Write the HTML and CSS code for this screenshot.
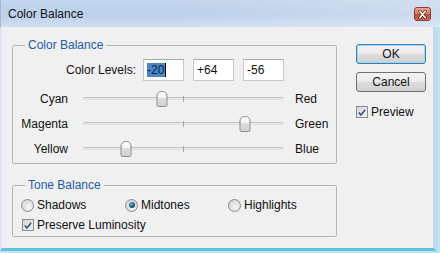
FILE: index.html
```html
<!DOCTYPE html>
<html lang="en">
<head>
    <meta charset="UTF-8">
    <link rel="stylesheet" href="styles.css">
    <title>Color Balance</title>
</head>
<body>
    <div class="window">
        <div class="titlebar">
            <span class="title">Color Balance</span>
            <div class="close">
                <svg width="16" height="13" viewBox="0 0 16 13">
                    <path d="M5 3 L11 10 M11 3 L5 10" stroke="#5a2a24" stroke-width="3.2" stroke-linecap="round"/>
                    <path d="M5 3 L11 10 M11 3 L5 10" stroke="#ffffff" stroke-width="1.6" stroke-linecap="round"/>
                </svg>
            </div>
        </div>
        <div class="client">
            <div class="main">
                <fieldset class="group levels">
                    <legend>Color Balance</legend>
                    <div class="levelrow">
                        <span class="levellabel">Color Levels:</span>
                        <div class="field"><span class="sel">-20</span></div>
                        <div class="field">+64</div>
                        <div class="field">-56</div>
                    </div>
                    <div class="sliderrow">
                        <span class="left">Cyan</span>
                        <div class="track"><div class="groove"></div><div class="tick"></div><div class="thumb" style="left: 79px"></div></div>
                        <span class="right">Red</span>
                    </div>
                    <div class="sliderrow">
                        <span class="left">Magenta</span>
                        <div class="track"><div class="groove"></div><div class="tick"></div><div class="thumb" style="left: 162px"></div></div>
                        <span class="right">Green</span>
                    </div>
                    <div class="sliderrow">
                        <span class="left">Yellow</span>
                        <div class="track"><div class="groove"></div><div class="tick"></div><div class="thumb" style="left: 43px"></div></div>
                        <span class="right">Blue</span>
                    </div>
                </fieldset>
                <fieldset class="group tone">
                    <legend>Tone Balance</legend>
                    <div class="radiorow">
                        <div class="opt"><span class="radio"></span>Shadows</div>
                        <div class="opt"><span class="radio on"><span class="dot"></span></span>Midtones</div>
                        <div class="opt"><span class="radio"></span>Highlights</div>
                    </div>
                    <div class="opt check">
                        <span class="box">
                            <svg width="11" height="11" viewBox="0 0 11 11"><path d="M2 5.5 L4.3 8.2 L9 2.5" fill="none" stroke="#3e5289" stroke-width="1.8"/></svg>
                        </span>Preserve Luminosity
                    </div>
                </fieldset>
            </div>
            <div class="side">
                <div class="btn default">OK</div>
                <div class="btn">Cancel</div>
                <div class="opt preview">
                    <span class="box">
                        <svg width="11" height="11" viewBox="0 0 11 11"><path d="M2 5.5 L4.3 8.2 L9 2.5" fill="none" stroke="#3e5289" stroke-width="1.8"/></svg>
                    </span>Preview
                </div>
            </div>
        </div>
    </div>
</body>
</html>
```

FILE: styles.css
```css
body {
    margin: 0;
    background-color: #f0f0f0;
    font-family: "Liberation Sans", Arial, sans-serif;
    font-size: 12px;
    color: #111;
}
.window {
    width: 440px;
    height: 253px;
    overflow: hidden;
    background-color: #bfe6f0;
}
.titlebar {
    height: 27px;
    display: flex;
    align-items: center;
    justify-content: space-between;
    padding: 0 9px 0 7px;
    box-sizing: border-box;
    background: linear-gradient(90deg, rgba(255,255,255,0) 40%, rgba(255,255,255,0.25) 100%),
                linear-gradient(180deg, #c3d5ec 0%, #bcd0ea 55%, #d0def1 100%);
    border-left: 1px solid #a3b8d3;
}
.title {
    font-size: 12px;
    color: #111;
    padding-top: 1px;
}
.close {
    width: 17px;
    height: 14px;
    border: 1px solid #8d3b30;
    border-radius: 3px;
    box-sizing: border-box;
    background: linear-gradient(180deg, #eba898 0%, #d57563 50%, #bd4d38 55%, #cc6a52 100%);
    display: flex;
}
.close svg {
    margin: 0;
}
.client {
    display: flex;
    gap: 19px;
    padding: 11px 0 0 10px;
    box-sizing: border-box;
    background-color: #f0f0f0;
    border-left: 2px solid #dce6f2;
    border-right: 4px solid #c2d9ee;
    margin-right: 3px;
    border-bottom: 3px solid #5fc2dc;
    height: 224px;
}
.main {
    width: 325px;
    display: flex;
    flex-direction: column;
}
.group {
    margin: 0;
    border: 1px solid #b4b4b4;
    border-radius: 2px;
    padding: 7px 0 2px 8px;
}
.group legend {
    color: #1e5ba8;
    padding: 0 3px;
    margin-left: 4px;
    line-height: 14px;
}
.tone {
    margin-top: 14px;
    padding-top: 5px;
    padding-bottom: 3px;
}
.levelrow {
    display: flex;
    align-items: center;
    gap: 9px;
    height: 22px;
    margin-bottom: 5px;
}
.levellabel {
    width: 115px;
    text-align: right;
    margin-right: -2px;
}
.field {
    width: 41px;
    height: 22px;
    box-sizing: border-box;
    border: 1px solid #c4c9cf;
    border-top-color: #a6abb1;
    background-color: #fff;
    padding: 3px 0 0 3px;
    line-height: 14px;
}
.sel {
    background-color: #4a86c8;
    color: #0d1f3c;
    border-right: 1px solid #000;
    padding-right: 1px;
}
.sliderrow {
    display: flex;
    align-items: center;
    height: 25px;
}
.left {
    width: 47px;
    text-align: right;
}
.right {
    margin-left: 12px;
}
.track {
    position: relative;
    width: 200px;
    height: 25px;
    margin-left: 15px;
}
.groove {
    position: absolute;
    left: 0;
    right: 0;
    top: 11px;
    height: 3px;
    box-sizing: border-box;
    border: 1px solid #c4c4c4;
    border-bottom-color: #e4e4e4;
    border-radius: 2px;
    background-color: #e8e8e8;
}
.tick {
    position: absolute;
    left: 100px;
    top: 10px;
    width: 1px;
    height: 6px;
    background-color: #a8a8a8;
}
.thumb {
    position: absolute;
    top: 5px;
    width: 11px;
    height: 16px;
    box-sizing: border-box;
    transform: translateX(-50%);
    border: 1px solid #8a8a8a;
    border-radius: 5px 5px 2px 2px;
    background: linear-gradient(180deg, #ffffff 0%, #f4f4f4 40%, #dcdcdc 45%, #d2d2d2 100%);
}
.radiorow {
    display: grid;
    grid-template-columns: 104px 103px 104px;
    height: 16px;
    margin-bottom: 4px;
}
.opt {
    display: flex;
    align-items: center;
    height: 16px;
}
.radio {
    width: 13px;
    height: 13px;
    box-sizing: border-box;
    border: 1px solid #8c8c8c;
    border-radius: 50%;
    background: radial-gradient(circle at 60% 65%, #f6f6f6 0%, #dcdcdc 60%, #c8c8c8 100%);
    margin-right: 3px;
    display: flex;
    align-items: center;
    justify-content: center;
}
.dot {
    width: 6px;
    height: 6px;
    border-radius: 50%;
    background: radial-gradient(circle at 40% 35%, #7fb8dc 0%, #1e5378 55%, #0c2c46 100%);
}
.box {
    width: 12px;
    height: 12px;
    box-sizing: border-box;
    border: 1px solid #8c8c8c;
    background: linear-gradient(135deg, #d4d4d4 0%, #f4f4f4 100%);
    margin: 0 3px 0 1px;
    display: flex;
    align-items: center;
    justify-content: center;
}
.side {
    width: 70px;
    display: flex;
    flex-direction: column;
}
.btn {
    height: 20px;
    margin-top: 8px;
    box-sizing: border-box;
    border: 1px solid #707070;
    border-radius: 3px;
    background: linear-gradient(180deg, #f2f2f2 0%, #ebebeb 48%, #dddddd 52%, #cfcfcf 100%);
    text-align: center;
    line-height: 18px;
}
.btn.default {
    margin-top: 6px;
    border-color: #3c7fb1;
    box-shadow: inset 0 0 0 1px #9ad7f2;
}
.preview {
    margin-top: 12px;
}
.preview .box {
    margin-left: 0;
}
```
